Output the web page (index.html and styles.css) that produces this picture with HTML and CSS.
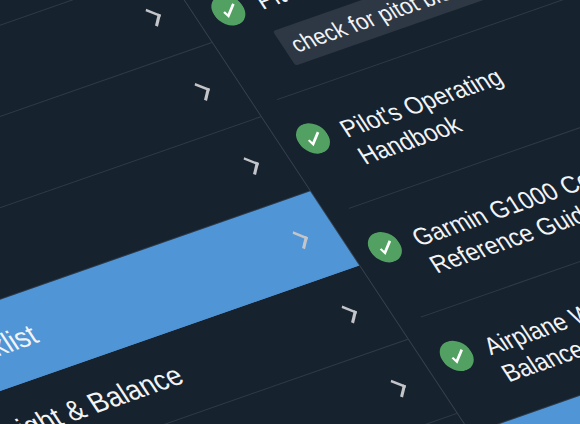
FILE: index.html
```html
<!DOCTYPE html>
<html lang="en">
<head>
    <meta charset="UTF-8">
    <title>Checklist</title>
    <link rel="stylesheet" href="styles.css">
</head>
<body>
    <div class="board">
        <div class="menu">
            <div class="menu-row"><span class="chev"></span></div>
            <div class="menu-row"><span class="chev"></span></div>
            <div class="menu-row"><span class="chev"></span></div>
            <div class="menu-row"><span class="chev"></span></div>
            <div class="menu-row"><span class="chev"></span></div>
            <div class="menu-row active"><span class="label">Checklist</span><span class="chev"></span></div>
            <div class="menu-row"><span class="label">Weight &amp; Balance</span><span class="chev"></span></div>
            <div class="menu-row"><span class="chev"></span></div>
        </div>
        <div class="items">
            <div class="item first">
                <svg class="check" viewBox="0 0 34 34"><circle cx="17" cy="17" r="17" fill="#52a162"/><path d="M11.7 17.2L13.3 22.5 26 12.6" fill="none" stroke="#fff" stroke-width="2.6"/></svg>
                <div class="item-body">
                    <div class="item-title">Pitot Static System</div>
                    <div class="note">check for pitot blockage before each flight</div>
                </div>
            </div>
            <div class="item">
                <svg class="check" viewBox="0 0 34 34"><circle cx="17" cy="17" r="17" fill="#52a162"/><path d="M11.7 17.2L13.3 22.5 26 12.6" fill="none" stroke="#fff" stroke-width="2.6"/></svg>
                <div class="item-body">
                    <div class="item-title">Pilot's Operating<br>Handbook</div>
                </div>
            </div>
            <div class="item">
                <svg class="check" viewBox="0 0 34 34"><circle cx="17" cy="17" r="17" fill="#52a162"/><path d="M11.7 17.2L13.3 22.5 26 12.6" fill="none" stroke="#fff" stroke-width="2.6"/></svg>
                <div class="item-body">
                    <div class="item-title">Garmin G1000 Cockpit<br>Reference Guide</div>
                </div>
            </div>
            <div class="item">
                <svg class="check" viewBox="0 0 34 34"><circle cx="17" cy="17" r="17" fill="#52a162"/><path d="M11.7 17.2L13.3 22.5 26 12.6" fill="none" stroke="#fff" stroke-width="2.6"/></svg>
                <div class="item-body">
                    <div class="item-title">Airplane Weight &amp;<br>Balance</div>
                </div>
            </div>
            <div class="item-active"></div>
        </div>
    </div>
</body>
</html>
```

FILE: styles.css
```css
html, body {
    margin: 0;
    height: 100%;
    overflow: hidden;
    background-color: #17222f;
}
.board {
    display: flex;
    width: 1100px;
    height: 900px;
    font-family: "Liberation Sans", Arial, sans-serif;
    color: #f2f4f6;
    transform-origin: 0 0;
    transform: matrix(0.83, -0.29, 0.557, 0.843, -349.1, -34.9);
}
.menu {
    width: 500px;
    flex: none;
    box-sizing: border-box;
    border-right: 1px solid #3a4450;
}
.menu-row {
    height: 88px;
    box-sizing: border-box;
    padding: 0 35px 0 16px;
    display: flex;
    align-items: center;
    justify-content: space-between;
    border-bottom: 1px solid #2f3a46;
    font-size: 30px;
}
.menu-row.active {
    background-color: #5095d6;
    border-bottom-color: #5095d6;
}
.label {
    white-space: nowrap;
}
.chev {
    width: 15px;
    height: 15px;
    margin-left: auto;
    box-sizing: border-box;
    border-top: 3px solid #c4c5c9;
    border-right: 3px solid #c4c5c9;
    transform: rotate(45deg);
}
.items {
    flex: 1;
    padding-top: 189px;
}
.item {
    display: flex;
    height: 129px;
    box-sizing: border-box;
    margin-left: 26px;
    padding-top: 32px;
    border-bottom: 1px solid #2f3a46;
}
.item.first {
    height: 152px;
}
.check {
    width: 34px;
    height: 34px;
    flex: none;
    margin-left: -7px;
}
.item-body {
    margin-left: 17px;
    padding-top: 3px;
}
.item-title {
    font-size: 26px;
    line-height: 32px;
    white-space: nowrap;
}
.note {
    margin: 17px 0 0 -4px;
    height: 41px;
    line-height: 41px;
    padding: 0 10px;
    border-radius: 3px;
    background-color: #2e3844;
    font-size: 24px;
    white-space: nowrap;
}
.item-active {
    height: 120px;
    margin-left: -1px;
    background-color: #5095d6;
}
```
